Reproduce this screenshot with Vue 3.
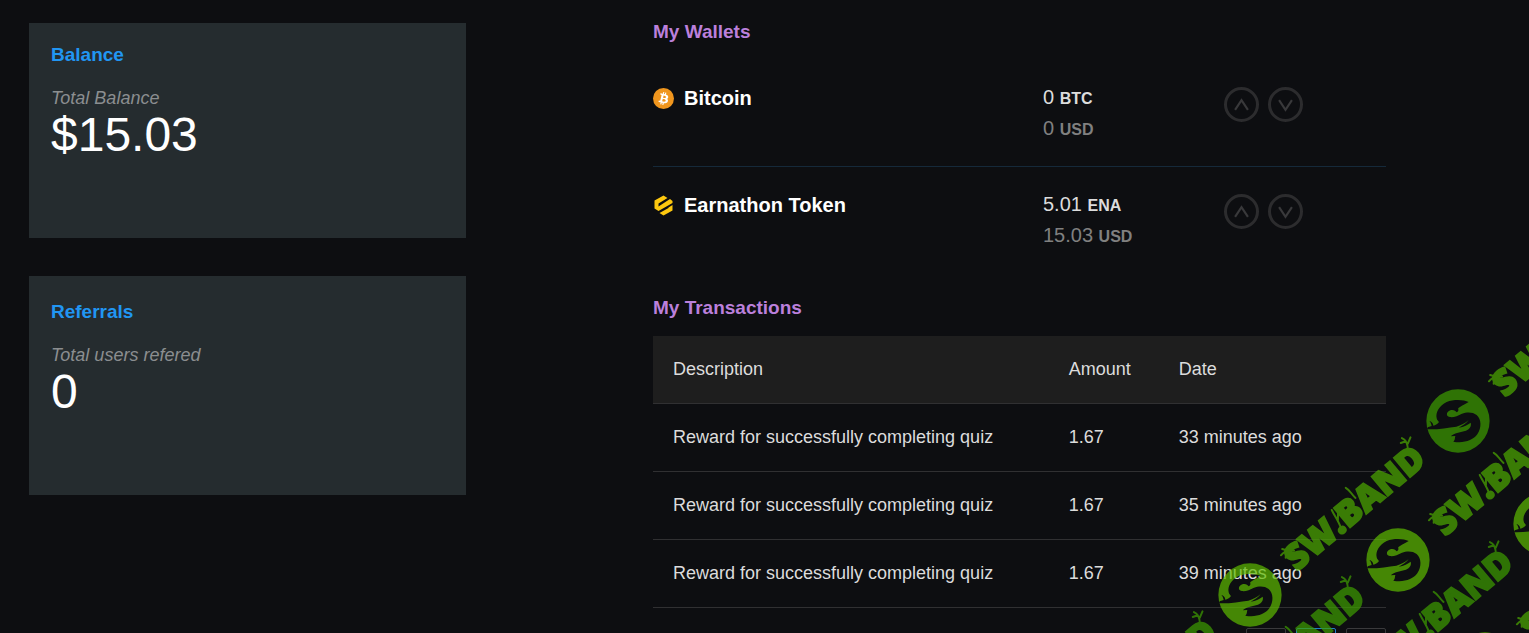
<template>
  <div class="dashboard">
    <aside class="summary">
      <section
        v-for="card in cards"
        :key="card.title"
        class="summary-card"
      >
        <h2 class="summary-title">{{ card.title }}</h2>
        <p class="summary-label">{{ card.label }}</p>
        <p class="summary-value">{{ card.value }}</p>
      </section>
    </aside>

    <main class="account">
      <section>
        <h2 class="section-title">My Wallets</h2>
        <div
          v-for="wallet in wallets"
          :key="wallet.symbol"
          class="wallet"
        >
          <div class="wallet-name">
            <svg
              v-if="wallet.symbol === 'BTC'"
              class="wallet-icon"
              viewBox="0 0 32 32"
              aria-hidden="true"
            >
              <circle cx="16" cy="16" r="16" fill="#f0961e" />
              <path
                fill="#fff"
                d="M23.189 14.02c.314-2.096-1.283-3.223-3.465-3.975l.708-2.84-1.728-.43-.69 2.765c-.454-.114-.92-.22-1.385-.326l.695-2.783L15.596 6l-.708 2.839c-.376-.086-.746-.17-1.104-.26l.002-.009-2.384-.595-.46 1.846s1.283.294 1.256.312c.7.175.826.638.805 1.006l-.806 3.235c.048.012.11.03.18.057l-.183-.045-1.13 4.532c-.086.212-.303.531-.793.41.018.025-1.256-.313-1.256-.313l-.858 1.978 2.25.561c.418.105.828.215 1.231.318l-.715 2.872 1.727.43.708-2.84c.472.127.93.245 1.378.357l-.706 2.828 1.728.43.715-2.866c2.948.558 5.164.333 6.097-2.333.752-2.146-.037-3.385-1.588-4.192 1.13-.26 1.98-1.003 2.207-2.538zm-3.95 5.538c-.533 2.147-4.148.986-5.32.695l.95-3.805c1.172.293 4.929.872 4.37 3.11zm.535-5.569c-.487 1.953-3.495.96-4.47.717l.86-3.45c.975.243 4.118.696 3.61 2.733z"
              />
            </svg>
            <svg
              v-else
              class="wallet-icon"
              viewBox="0 0 42 42"
              aria-hidden="true"
            >
              <path
                fill="#fdc80f"
                d="M3 11 21 1l8 5-18 11v6L34 8l5 4v4L11 32l-8-5zM39 20v11L21 41l-8-5 18-10v-1z"
              />
            </svg>
            <h3>{{ wallet.name }}</h3>
          </div>
          <div class="wallet-amounts">
            <p>{{ wallet.amount }} <b>{{ wallet.symbol }}</b></p>
            <p class="wallet-usd">{{ wallet.usd }} <b>USD</b></p>
          </div>
          <div class="wallet-actions">
            <button type="button" class="round-btn" :aria-label="'Send ' + wallet.name">
              <svg viewBox="0 0 14 14"><path d="M1 12 7 3l6 9" /></svg>
            </button>
            <button type="button" class="round-btn" :aria-label="'Receive ' + wallet.name">
              <svg viewBox="0 0 14 14"><path d="M1 3l6 9 6-9" /></svg>
            </button>
          </div>
        </div>
      </section>

      <section class="transactions">
        <h2 class="section-title">My Transactions</h2>
        <table>
          <thead>
            <tr>
              <th class="col-description" scope="col">Description</th>
              <th class="col-amount" scope="col">Amount</th>
              <th scope="col">Date</th>
            </tr>
          </thead>
          <tbody>
            <tr v-for="item in transactions" :key="item.date">
              <td>{{ item.description }}</td>
              <td>{{ item.amount }}</td>
              <td>{{ item.date }}</td>
            </tr>
          </tbody>
        </table>
        <nav class="pagination" aria-label="Transactions pages">
          <button type="button" class="page-btn" aria-label="Previous page"></button>
          <button type="button" class="page-btn page-btn-active" aria-label="Page 1"></button>
          <button type="button" class="page-btn" aria-label="Next page"></button>
        </nav>
      </section>
    </main>

    <!-- Site stamp, repeated diagonally over the corner -->
    <svg class="stamp" viewBox="0 0 349 293" aria-hidden="true">
      <defs>
        <path
          id="stamp-logo"
          fill-rule="evenodd"
          d="M-95 0a95 95 0 1 0 190 0a95 95 0 1 0-190 0zM32-57C18-64-12-66-34-57C-56-46-68-26-64-8C-63-3-60 0-57 3C-62 10-68 13-74 14C-75 6-80 1-86 0C-82 4-80 10-79 15L-91 19L-92 25C-60 26-30 20-5 17C8 13 22 7 32-3C26 6 14 14 2 20C18 18 30 11 38 5C41 14 36 24 24 29C8 34-8 34-22 46L-8 45C-10 52-8 56-14 62C16 68 46 58 58 40C72 20 70-6 56-18C44-28 26-27 12-22C0-16-14-10-24-12C-34-14-36-22-30-28C-24-34-14-34-8-30L-4-26C0-28 2-31 1-35C-2-40 10-44 32-57z"
        />
        <g id="stamp-sprigs" stroke-linecap="round">
          <path d="M-74-5C-78-10-82-11-87-10M-78-8L-82-14M-80-10L-85-5" />
          <path d="M-24 9C-21 2-21-4-19-12M-21 0L-15-7M7-6C6-12 8-15 6-20" />
          <path d="M78-9C82-14 83-18 81-22M82-14L88-17M82-17L77-19" />
        </g>
      </defs>
      <use
        v-for="(logo, i) in stampLogos"
        :key="'logo' + i"
        href="#stamp-logo"
        :fill="logo.color"
        :transform="`translate(${logo.x} ${logo.y}) scale(0.333)`"
      />
      <g
        v-for="(word, i) in stampWords"
        :key="'word' + i"
        :fill="word.color"
        :stroke="word.color"
        stroke-width="2"
        :transform="`translate(${word.x} ${word.y}) rotate(-40)`"
      >
        <text class="stamp-word" x="0" y="13">SW.BAND</text>
        <use href="#stamp-sprigs" fill="none" />
      </g>
    </svg>
  </div>
</template>

<script setup>
const cards = [
  { title: 'Balance', label: 'Total Balance', value: '$15.03' },
  { title: 'Referrals', label: 'Total users refered', value: '0' }
]

const wallets = [
  { name: 'Bitcoin', symbol: 'BTC', amount: '0', usd: '0' },
  { name: 'Earnathon Token', symbol: 'ENA', amount: '5.01', usd: '15.03' }
]

const transactions = [
  { description: 'Reward for successfully completing quiz', amount: '1.67', date: '33 minutes ago' },
  { description: 'Reward for successfully completing quiz', amount: '1.67', date: '35 minutes ago' },
  { description: 'Reward for successfully completing quiz', amount: '1.67', date: '39 minutes ago' }
]

const stampLogos = [
  { x: 70, y: 255, color: '#5ebb00' },
  { x: 278, y: 81, color: '#3f9e00' },
  { x: 218, y: 220, color: '#5ebb00' },
  { x: 365, y: 184, color: '#5ebb00' },
  { x: 305, y: 324, color: '#5ebb00' }
]

const stampWords = [
  { x: -34, y: 341, color: '#3f9e00' },
  { x: 174, y: 167, color: '#4fac00' },
  { x: 382, y: -7, color: '#4fac00' },
  { x: 114, y: 306, color: '#3f9e00' },
  { x: 322, y: 132, color: '#4fac00' },
  { x: 262, y: 271, color: '#3f9e00' },
  { x: 410, y: 236, color: '#4fac00' }
]
</script>

<style>
body {
  margin: 0;
  background: #0d0e11;
}
</style>

<style scoped>
.dashboard {
  display: grid;
  grid-template-columns: 437fr 733fr;
  column-gap: 187px;
  align-items: start;
  padding: 20px 143px 20px 29px;
  font-family: "Liberation Sans", Arial, sans-serif;
  font-size: 18px;
  color: #dcdcdc;
}

h2,
h3,
p {
  margin: 0;
}

.summary {
  display: flex;
  flex-direction: column;
  gap: 38px;
  padding-top: 3px;
}

.summary-card {
  padding: 20px 22px 78px;
  background: #252c2f;
}

.summary-card + .summary-card {
  padding-top: 24px;
}

.summary-title,
.section-title {
  font-size: 19px;
  line-height: 24px;
  font-weight: bold;
}

.summary-title {
  margin-bottom: 19px;
  color: #2196f3;
}

.summary-label {
  font-style: italic;
  line-height: 24px;
  color: #8b8e90;
}

.summary-value {
  font-size: 48px;
  line-height: 50px;
  color: #fff;
}

.section-title {
  margin-bottom: 16px;
  color: #bb80dc;
}

.wallet {
  display: grid;
  grid-template-columns: 390fr 181fr 162fr;
  padding: 22px 0;
}

.wallet + .wallet {
  border-top: 1px solid #15293a;
}

.wallet-name {
  display: flex;
  gap: 10px;
  height: 32px;
  align-items: center;
}

.wallet-name h3 {
  font-size: 20px;
  color: #fff;
}

.wallet-icon {
  width: 21px;
  height: 21px;
}

.wallet-amounts {
  font-size: 20px;
  line-height: 31px;
}

.wallet-amounts b {
  font-size: 16px;
  line-height: 16px;
}

.wallet-usd {
  color: #808080;
}

.wallet-actions {
  display: flex;
  gap: 9px;
  padding-top: 5px;
}

.round-btn {
  display: flex;
  align-items: center;
  justify-content: center;
  width: 35px;
  height: 35px;
  padding: 0;
  border: 3px solid #2c2c2e;
  border-radius: 50%;
  background: none;
  cursor: pointer;
}

.round-btn svg {
  width: 15px;
  height: 15px;
  fill: none;
  stroke: #39393b;
  stroke-width: 2;
}

.transactions {
  margin-top: 23px;
}

table {
  width: 100%;
  table-layout: fixed;
  border-collapse: separate;
  border-spacing: 0;
}

th,
td {
  box-sizing: border-box;
  height: 68px;
  padding: 0 20px;
  border-bottom: 1px solid #303032;
  text-align: left;
  font-weight: normal;
  white-space: nowrap;
}

thead {
  background: #1e1e1e;
}

.col-description {
  width: 54%;
}

.col-amount {
  width: 15%;
}

.pagination {
  display: flex;
  justify-content: flex-end;
  gap: 10px;
  margin-top: 20px;
}

.page-btn {
  width: 40px;
  height: 40px;
  border: 1px solid #3a3a3c;
  border-radius: 2px;
  background: none;
}

.page-btn-active {
  border-color: #2180c8;
}

.stamp {
  position: fixed;
  right: 0;
  bottom: 0;
  width: 349px;
  height: 293px;
  opacity: 0.7;
  pointer-events: none;
}

.stamp-word {
  font-family: "Open Sans", "Noto Sans", sans-serif;
  font-size: 35px;
  font-weight: 800;
  text-anchor: middle;
}
</style>
